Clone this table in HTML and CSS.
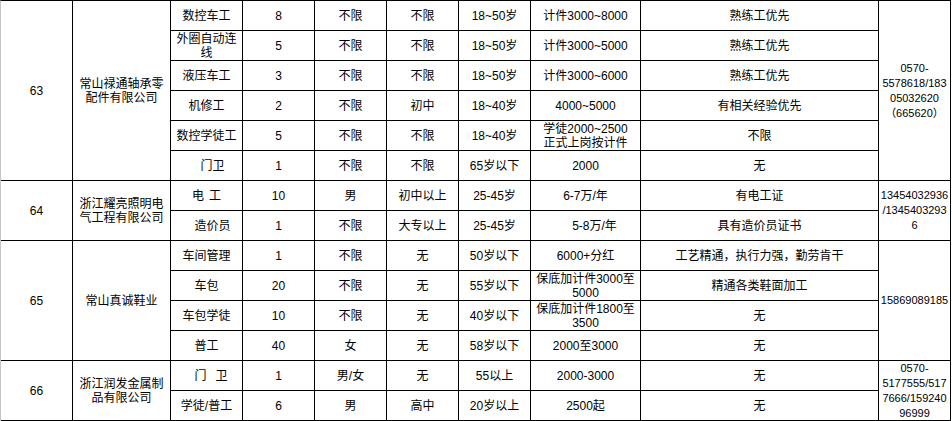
FILE: index.html
```html
<!DOCTYPE html>
<html lang="zh-CN">
<head>
<meta charset="utf-8">
<title>招聘信息表</title>
<link rel="stylesheet" href="styles.css">
</head>
<body>
<div class="sheet">
  <!-- 63 -->
  <div class="c r6">63</div>
  <div class="c r6 lh">常山禄通轴承零<br>配件有限公司</div>
  <div class="c">数控车工</div><div class="c">8</div><div class="c">不限</div><div class="c">不限</div><div class="c">18~50岁</div><div class="c">计件3000~8000</div><div class="c">熟练工优先</div>
  <div class="c r6 ph">0570-<br>5578618/183<br>05032620<br>（665620）</div>

  <div class="c lh clip">外圈自动连<br>线</div><div class="c">5</div><div class="c">不限</div><div class="c">不限</div><div class="c">18~50岁</div><div class="c">计件3000~5000</div><div class="c">熟练工优先</div>
  <div class="c">液压车工</div><div class="c">3</div><div class="c">不限</div><div class="c">不限</div><div class="c">18~50岁</div><div class="c">计件3000~6000</div><div class="c">熟练工优先</div>
  <div class="c">机修工</div><div class="c">2</div><div class="c">不限</div><div class="c">初中</div><div class="c">18~40岁</div><div class="c">4000~5000</div><div class="c">有相关经验优先</div>
  <div class="c">数控学徒工</div><div class="c">5</div><div class="c">不限</div><div class="c">不限</div><div class="c">18~40岁</div><div class="c lh clip">学徒2000~2500<br>正式上岗按计件</div><div class="c">不限</div>
  <div class="c"><span class="sp w12"></span>门卫</div><div class="c">1</div><div class="c">不限</div><div class="c">不限</div><div class="c">65岁以下</div><div class="c">2000</div><div class="c">无</div>

  <!-- 64 -->
  <div class="c r2">64</div>
  <div class="c r2 lh">浙江耀亮照明电<br>气工程有限公司</div>
  <div class="c">电<span class="sp w5"></span>工</div><div class="c">10</div><div class="c">男</div><div class="c">初中以上</div><div class="c">25-45岁</div><div class="c">6-7万/年</div><div class="c">有电工证</div>
  <div class="c r2 ph">13454032936<br>/1345403293<br>6</div>
  <div class="c"><span class="sp w12"></span>造价员</div><div class="c">1</div><div class="c">不限</div><div class="c">大专以上</div><div class="c">25-45岁</div><div class="c"><span class="sp w18"></span>5-8万/年</div><div class="c">具有造价员证书</div>

  <!-- 65 -->
  <div class="c r4">65</div>
  <div class="c r4">常山真诚鞋业</div>
  <div class="c">车间管理</div><div class="c">1</div><div class="c">不限</div><div class="c">无</div><div class="c">50岁以下</div><div class="c">6000+分红</div><div class="c">工艺精通，执行力强，勤劳肯干</div>
  <div class="c r4 ph">15869089185</div>
  <div class="c">车包</div><div class="c">20</div><div class="c">不限</div><div class="c">无</div><div class="c">55岁以下</div><div class="c lh clip">保底加计件3000至<br>5000</div><div class="c">精通各类鞋面加工</div>
  <div class="c">车包学徒</div><div class="c">10</div><div class="c">不限</div><div class="c">无</div><div class="c">40岁以下</div><div class="c lh clip">保底加计件1800至<br>3500</div><div class="c">无</div>
  <div class="c">普工</div><div class="c">40</div><div class="c">女</div><div class="c">无</div><div class="c">58岁以下</div><div class="c">2000至3000</div><div class="c">无</div>

  <!-- 66 -->
  <div class="c r2">66</div>
  <div class="c r2 lh">浙江润发金属制<br>品有限公司</div>
  <div class="c"><span class="sp w9"></span>门<span class="sp w9"></span>卫</div><div class="c">1</div><div class="c">男/女</div><div class="c">无</div><div class="c">55以上</div><div class="c">2000-3000</div><div class="c">无</div>
  <div class="c r2 ph">0570-<br>5177555/517<br>7666/159240<br>96999</div>
  <div class="c">学徒/普工</div><div class="c">6</div><div class="c">男</div><div class="c">高中</div><div class="c">20岁以上</div><div class="c">2500起</div><div class="c">无</div>
</div>
</body>
</html>
```

FILE: styles.css
```css
html, body {
  margin: 0;
  padding: 0;
  background: #ffffff;
}

.sheet {
  display: grid;
  grid-template-columns: 72px 98px 72px 72px 72px 72px 72px 110px 238px 72px;
  grid-template-rows: repeat(14, 30px);
  width: 950px;
  border-top: 1px solid #000;
  border-left: 1px solid #c4c4c4;
  font-family: "Liberation Sans", "Noto Sans CJK SC", sans-serif;
  font-size: 12px;
  color: #000;
}

.c {
  box-sizing: border-box;
  border-right: 1px solid #000;
  border-bottom: 1px solid #000;
  display: flex;
  align-items: center;
  justify-content: center;
  text-align: center;
  line-height: 14px;
  white-space: nowrap;
  overflow: hidden;
}

.lh {
  line-height: 14px;
}

.clip {
  align-items: center;
}

.r2 { grid-row: span 2; }
.r4 { grid-row: span 4; }
.r6 { grid-row: span 6; }

.ph {
  font-size: 11px;
  line-height: 15px;
}

.sp {
  display: inline-block;
  height: 1px;
}
.w5 { width: 5px; }
.w9 { width: 9px; }
.w12 { width: 12px; }
.w18 { width: 18px; }
```
